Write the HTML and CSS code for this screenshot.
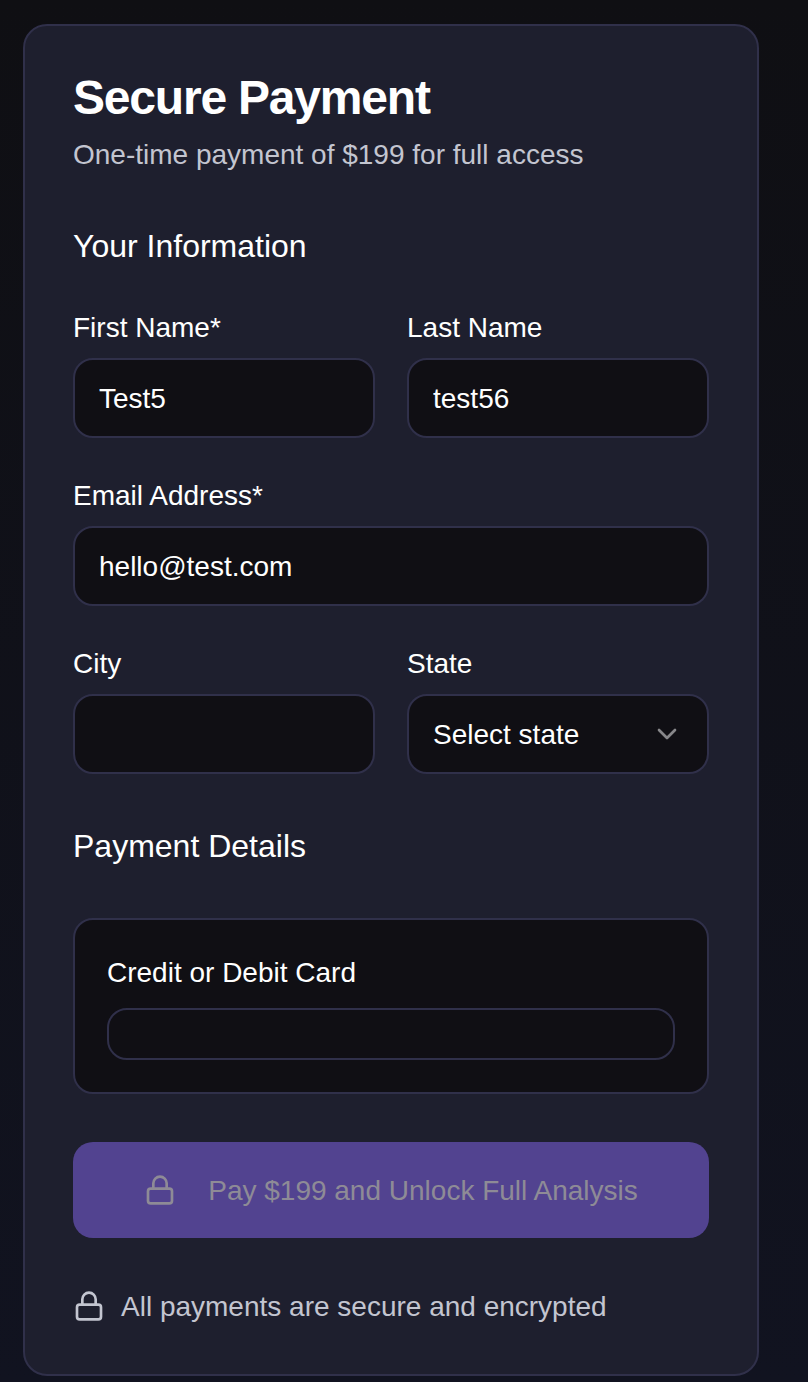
FILE: index.html
```html
<!DOCTYPE html>
<html lang="en">
<head>
<meta charset="utf-8">
<title>Secure Payment</title>
<link rel="stylesheet" href="styles.css">
</head>
<body>
<main class="card">
  <header class="intro">
    <h1 class="title">Secure Payment</h1>
    <p class="subtitle">One-time payment of $199 for full access</p>
  </header>
  <form class="form">
    <h2 class="section-title">Your Information</h2>
    <div class="row">
      <div class="field"><label class="label" for="first">First Name*</label><input class="input" id="first" value="Test5"></div>
      <div class="field"><label class="label" for="last">Last Name</label><input class="input" id="last" value="test56"></div>
    </div>
    <div class="field"><label class="label" for="email">Email Address*</label><input class="input" id="email" value="hello@test.com"></div>
    <div class="row">
      <div class="field"><label class="label" for="city">City</label><input class="input" id="city"></div>
      <div class="field">
        <span class="label">State</span>
        <div class="input select" role="combobox" tabindex="0">
          <span>Select state</span>
          <svg class="icon chevron" viewBox="0 0 24 24"><path d="m6 9 6 6 6-6"/></svg>
        </div>
      </div>
    </div>
    <h2 class="section-title payment-title">Payment Details</h2>
    <div class="payment-box">
      <span class="label">Credit or Debit Card</span>
      <div class="card-element"></div>
    </div>
    <button class="pay" type="button" disabled>
      <svg class="icon" viewBox="0 0 24 24"><rect x="3" y="11" width="18" height="11" rx="2"/><path d="M7 11V7a5 5 0 0 1 10 0v4"/></svg>
      <span class="pay-text">Pay $199 and Unlock Full Analysis</span>
    </button>
  </form>
  <footer class="note">
    <svg class="icon" viewBox="0 0 24 24"><rect x="3" y="11" width="18" height="11" rx="2"/><path d="M7 11V7a5 5 0 0 1 10 0v4"/></svg>
    <span class="note-text">All payments are secure and encrypted</span>
  </footer>
</main>
</body>
</html>
```
FILE: styles.css
```css
* { box-sizing: border-box; }
html { height: 100%; }
body {
  margin: 0;
  height: 1382px;
  padding: 24px 49px 6px 23px;
  background: linear-gradient(#0f0f13, #111320);
  color: #fff;
  font: 28px/40px "Liberation Sans", Arial, sans-serif;
  overflow: hidden;
}
.card {
  height: 1352px;
  padding: 48px;
  border: 2px solid #30304a;
  border-radius: 24px;
  background: #1e1f2e;
}
.title {
  margin: 0 0 13px;
  font-size: 48px;
  line-height: 48px;
  font-weight: 700;
  letter-spacing: -1.2px;
}
.subtitle { margin: 0; color: #c3c5d0; }
.form { display: flex; flex-direction: column; gap: 32px; margin-top: 47px; }
.section-title { margin: 0; font-size: 32px; line-height: 48px; font-weight: 400; }
.row { display: grid; grid-template-columns: 1fr 1fr; gap: 32px; }
.field { display: flex; flex-direction: column; gap: 16px; min-width: 0; padding-top: 12px; }
.label { display: block; height: 28px; line-height: 28px; }
.input {
  width: 100%;
  height: 80px;
  padding: 2px 24px 0;
  border: 2px solid #30304a;
  border-radius: 20px;
  background: #100f14;
  color: #fff;
  font: inherit;
  outline: none;
}
.select { display: flex; align-items: center; justify-content: space-between; }
.icon {
  flex: none;
  width: 32px;
  height: 32px;
  fill: none;
  stroke: currentColor;
  stroke-width: 2;
  stroke-linecap: round;
  stroke-linejoin: round;
}
.chevron { margin-bottom: 2px; color: #87878a; }
.payment-title { margin: 16px 0; }
.payment-box {
  height: 176px;
  padding: 39px 32px 32px;
  border: 2px solid #30304a;
  border-radius: 20px;
  background: #100f14;
}
.card-element { height: 52px; margin-top: 21px; border: 2px solid #30304a; border-radius: 20px; }
.pay {
  display: flex;
  align-items: center;
  justify-content: center;
  gap: 32px;
  height: 96px;
  margin-top: 16px;
  padding: 0;
  border: 0;
  border-radius: 20px;
  background: #524390;
  color: #8e8b96;
  font: inherit;
}
.pay-text, .note-text { padding-top: 2px; }
.note { display: flex; align-items: center; gap: 16px; height: 40px; margin-top: 48px; color: #c3c5d0; }
```
